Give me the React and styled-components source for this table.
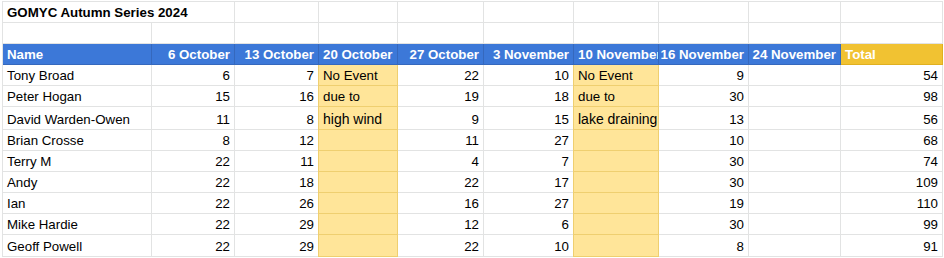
import React from 'react';
import styled, { createGlobalStyle } from 'styled-components';

const GlobalStyle = createGlobalStyle`
  html, body {
    margin: 0;
    padding: 0;
    background: #fff;
    overflow: hidden;
  }
  body {
    font-family: 'Liberation Sans', Arial, sans-serif;
  }
`;

const GRID = '#e2e3e3';
const BLUE = '#3c78d8';
const BLUE_LINE = '#3568bd';
const GOLD = '#f1c232';
const PALE = '#ffe599';
const PALE_LINE = '#efcf70';

const Sheet = styled.div`
  display: grid;
  grid-template-columns: 149px 83px 84px 79px 86px 90px 85px 90px 92px 102px;
  grid-template-rows: 21px 21px 21px 21px 21px 23px 21px 21px 21px 21px 21px 22px;
  margin: 1px 0 0 2px;
  border-top: 1px solid ${GRID};
  border-left: 1px solid ${GRID};
  width: max-content;
`;

const Cell = styled.div`
  box-sizing: border-box;
  display: flex;
  align-items: flex-end;
  justify-content: ${(p) => (p.$right ? 'flex-end' : 'flex-start')};
  padding: 0 4px 2px 4px;
  border-right: 1px solid ${(p) => p.$line || GRID};
  border-bottom: 1px solid ${(p) => p.$line || GRID};
  background: ${(p) => p.$bg || 'transparent'};
  color: ${(p) => p.$color || '#000'};
  font-size: ${(p) => p.$size || '13.3px'};
  font-weight: ${(p) => (p.$bold ? 700 : 400)};
  line-height: 15px;
  white-space: nowrap;
  overflow: hidden;
  grid-column: ${(p) => (p.$span ? `span ${p.$span}` : 'auto')};
  margin-left: ${(p) => (p.$overlap ? '-1px' : '0')};
  position: relative;
`;

const Title = styled(Cell)`
  font-weight: 700;
`;

const HeadCell = styled(Cell).attrs({ $bold: true, $color: '#fff' })``;

const NoteCell = styled(Cell)`
  border-left: 1px solid ${PALE_LINE};
  padding-left: 4px;
  padding-right: 2px;
`;

const headers = [
  { t: 'Name' },
  { t: '6 October', r: true },
  { t: '13 October', r: true },
  { t: '20 October' },
  { t: '27 October', r: true },
  { t: '3 November', r: true },
  { t: '10 November' },
  { t: '16 November', r: true },
  { t: '24 November', r: true },
  { t: 'Total', gold: true },
];

const note20 = ['No Event', 'due to', 'high wind'];
const note10 = ['No Event', 'due to', 'lake draining'];

const rows = [
  ['Tony Broad', 6, 7, 22, 10, 9, 54],
  ['Peter Hogan', 15, 16, 19, 18, 30, 98],
  ['David Warden-Owen', 11, 8, 9, 15, 13, 56],
  ['Brian Crosse', 8, 12, 11, 27, 10, 68],
  ['Terry M', 22, 11, 4, 7, 30, 74],
  ['Andy', 22, 18, 22, 17, 30, 109],
  ['Ian', 22, 26, 16, 27, 19, 110],
  ['Mike Hardie', 22, 29, 12, 6, 30, 99],
  ['Geoff Powell', 22, 29, 22, 10, 8, 91],
];

const NoEvent = ({ text, big }) => (
  <NoteCell $bg={PALE} $line={PALE_LINE} $overlap $size={big ? '14px' : undefined}>
    {text}
  </NoteCell>
);

const App = () => (
  <>
    <GlobalStyle />
    <Sheet>
      <Title $span={2}>GOMYC Autumn Series 2024</Title>
      {Array.from({ length: 8 }).map((_, i) => (
        <Cell key={`t${i}`} />
      ))}
      {Array.from({ length: 10 }).map((_, i) => (
        <Cell key={`b${i}`} />
      ))}
      {headers.map((h) => (
        <HeadCell
          key={h.t}
          $right={h.r}
          $bg={h.gold ? GOLD : BLUE}
          $line={h.gold ? '#e0b020' : BLUE_LINE}
        >
          {h.t}
        </HeadCell>
      ))}
      {rows.map((r, i) => {
        const [name, a, b, c, d, e, total] = r;
        const big = i === 2;
        return (
          <React.Fragment key={name}>
            <Cell>{name}</Cell>
            <Cell $right>{a}</Cell>
            <Cell $right>{b}</Cell>
            <NoEvent text={note20[i] || ''} big={big} />
            <Cell $right>{c}</Cell>
            <Cell $right>{d}</Cell>
            <NoEvent text={note10[i] || ''} big={big} />
            <Cell $right>{e}</Cell>
            <Cell />
            <Cell $right>{total}</Cell>
          </React.Fragment>
        );
      })}
    </Sheet>
  </>
);

export default App;
